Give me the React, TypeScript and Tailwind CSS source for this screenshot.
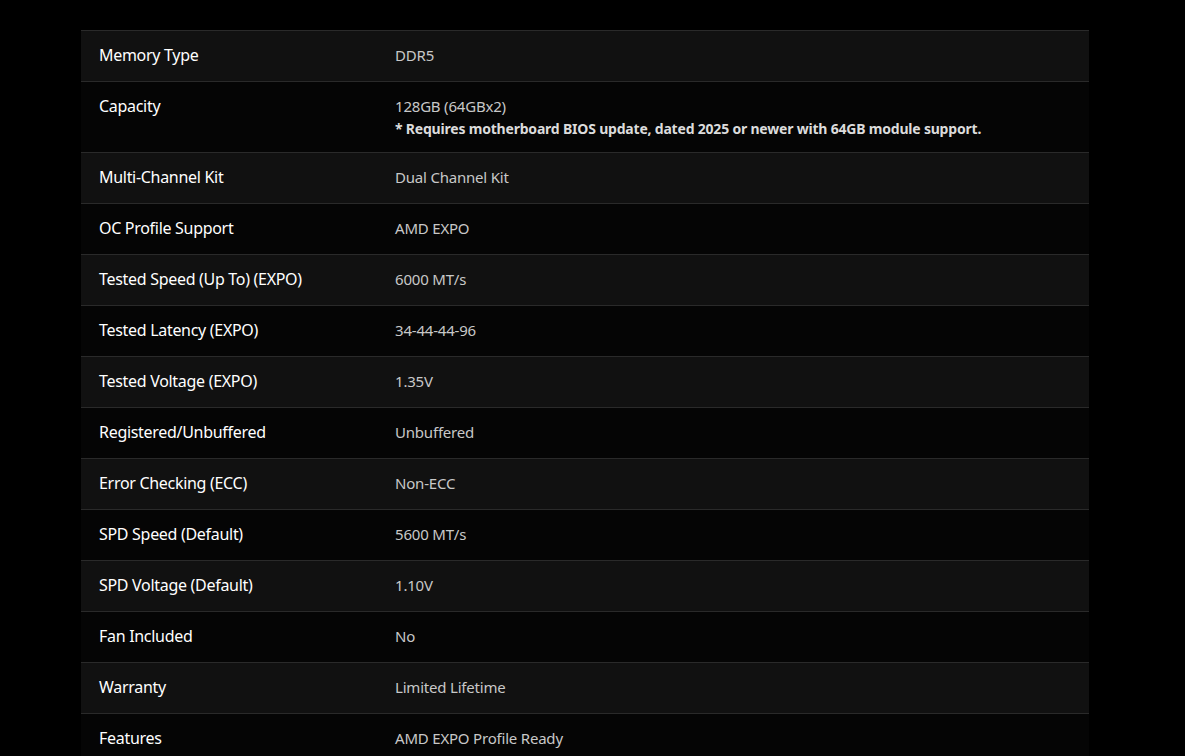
const rows: [string, React.ReactNode][] = [
  ["Memory Type", "DDR5"],
  [
    "Capacity",
    <>
      128GB (64GBx2)
      <br />
      <b className="font-bold text-[#dcdcdc] text-[14px]">
        * Requires motherboard BIOS update, dated 2025 or newer with 64GB module support.
      </b>
    </>,
  ],
  ["Multi-Channel Kit", "Dual Channel Kit"],
  ["OC Profile Support", "AMD EXPO"],
  ["Tested Speed (Up To) (EXPO)", "6000 MT/s"],
  ["Tested Latency (EXPO)", "34-44-44-96"],
  ["Tested Voltage (EXPO)", "1.35V"],
  ["Registered/Unbuffered", "Unbuffered"],
  ["Error Checking (ECC)", "Non-ECC"],
  ["SPD Speed (Default)", "5600 MT/s"],
  ["SPD Voltage (Default)", "1.10V"],
  ["Fan Included", "No"],
  ["Warranty", "Limited Lifetime"],
  ["Features", "AMD EXPO Profile Ready"],
];

export default function App() {
  return (
    <div className="min-h-screen bg-black pt-[30px] px-[81px] font-['Roboto',sans-serif]">
      <div className="w-[1008px] border-t border-[#2a2a2a]">
        {rows.map(([label, value], i) => (
          <div
            key={i}
            className={`flex border-b border-[#2a2a2a] pt-[13px] ${
              i === 1 ? "h-[71px]" : "h-[51px]"
            } ${i % 2 === 0 ? "bg-[#111111]" : "bg-[#050505]"}`}
          >
            <div className="w-[314px] pl-[18px] text-[16px] leading-[22px] text-white tracking-[-0.3px]">
              {label}
            </div>
            <div className="flex-1 text-[15px] leading-[22px] text-[#c8c8c8] tracking-[-0.2px]">
              {value}
            </div>
          </div>
        ))}
      </div>
    </div>
  );
}
